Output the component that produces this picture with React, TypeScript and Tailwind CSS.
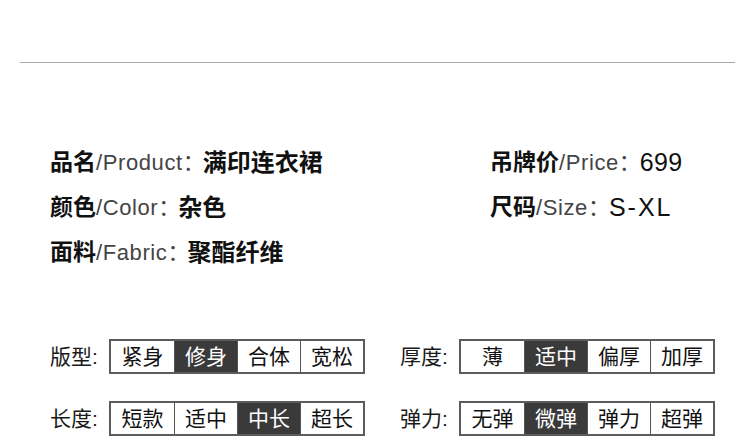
import React from 'react';

const cjk = "font-['Liberation_Sans','Noto_Sans_CJK_SC',sans-serif]";

type InfoRow = { cn: string; en: string; value: string; latinValue?: boolean; wide?: boolean };

const leftInfo: InfoRow[] = [
  { cn: '品名', en: '/Product', value: '满印连衣裙' },
  { cn: '颜色', en: '/Color', value: '杂色' },
  { cn: '面料', en: '/Fabric', value: '聚酯纤维' },
];

const rightInfo: InfoRow[] = [
  { cn: '吊牌价', en: '/Price', value: '699', latinValue: true },
  { cn: '尺码', en: '/Size', value: 'S-XL', latinValue: true, wide: true },
];

type Option = { label: string; options: string[]; active: number };

const leftOptions: Option[] = [
  { label: '版型', options: ['紧身', '修身', '合体', '宽松'], active: 1 },
  { label: '长度', options: ['短款', '适中', '中长', '超长'], active: 2 },
];

const rightOptions: Option[] = [
  { label: '厚度', options: ['薄', '适中', '偏厚', '加厚'], active: 1 },
  { label: '弹力', options: ['无弹', '微弹', '弹力', '超弹'], active: 1 },
];

const Info: React.FC<{ row: InfoRow }> = ({ row }) => (
  <div className={`flex items-center h-[45px] ${cjk}`}>
    <span className="text-[23px] font-bold text-[#111]">{row.cn}</span>
    <span className="text-[22px] text-[#444] tracking-[0.6px]">{row.en}</span>
    <span className="text-[22px] text-[#444] w-[20px]">：</span>
    {row.latinValue ? (
      <span className={`text-[25px] text-[#111] ml-[1px] ${row.wide ? 'tracking-[2px]' : 'tracking-[0.3px]'}`}>
        {row.value}
      </span>
    ) : (
      <span className="text-[24px] font-bold text-[#111]">{row.value}</span>
    )}
  </div>
);

const OptionRow: React.FC<{ opt: Option }> = ({ opt }) => (
  <div className={`flex items-center h-[35px] ${cjk}`}>
    <span className="w-[59px] text-[21px] text-[#1a1a1a]">{opt.label}:</span>
    <div className="flex h-[35px] border-2 border-[#5c5c5c]">
      {opt.options.map((o, i) => (
        <div
          key={o + i}
          className={`w-[63px] flex items-center justify-center text-[21px] ${
            i > 0 ? 'border-l border-[#555]' : ''
          } ${i === opt.active ? 'bg-[#3a3a3a] text-white' : 'bg-white text-[#111]'}`}
        >
          {o}
        </div>
      ))}
    </div>
  </div>
);

export default function App() {
  return (
    <div className="w-[750px] h-[445px] bg-white overflow-hidden">
      <div className="pt-[62px] px-[20px]">
        <div className="h-px bg-[#aaaaaa] w-[715px]" />
      </div>

      {/* product info */}
      <div className="flex pl-[50px] pt-[77px]">
        <div className="w-[440px]">
          {leftInfo.map((r) => (
            <Info key={r.cn} row={r} />
          ))}
        </div>
        <div>
          {rightInfo.map((r) => (
            <Info key={r.cn} row={r} />
          ))}
        </div>
      </div>

      {/* attribute selectors */}
      <div className="flex pl-[50px] pt-[64px]">
        <div className="w-[350px] flex flex-col gap-[27px]">
          {leftOptions.map((o) => (
            <OptionRow key={o.label} opt={o} />
          ))}
        </div>
        <div className="flex flex-col gap-[27px]">
          {rightOptions.map((o) => (
            <OptionRow key={o.label} opt={o} />
          ))}
        </div>
      </div>
    </div>
  );
}
